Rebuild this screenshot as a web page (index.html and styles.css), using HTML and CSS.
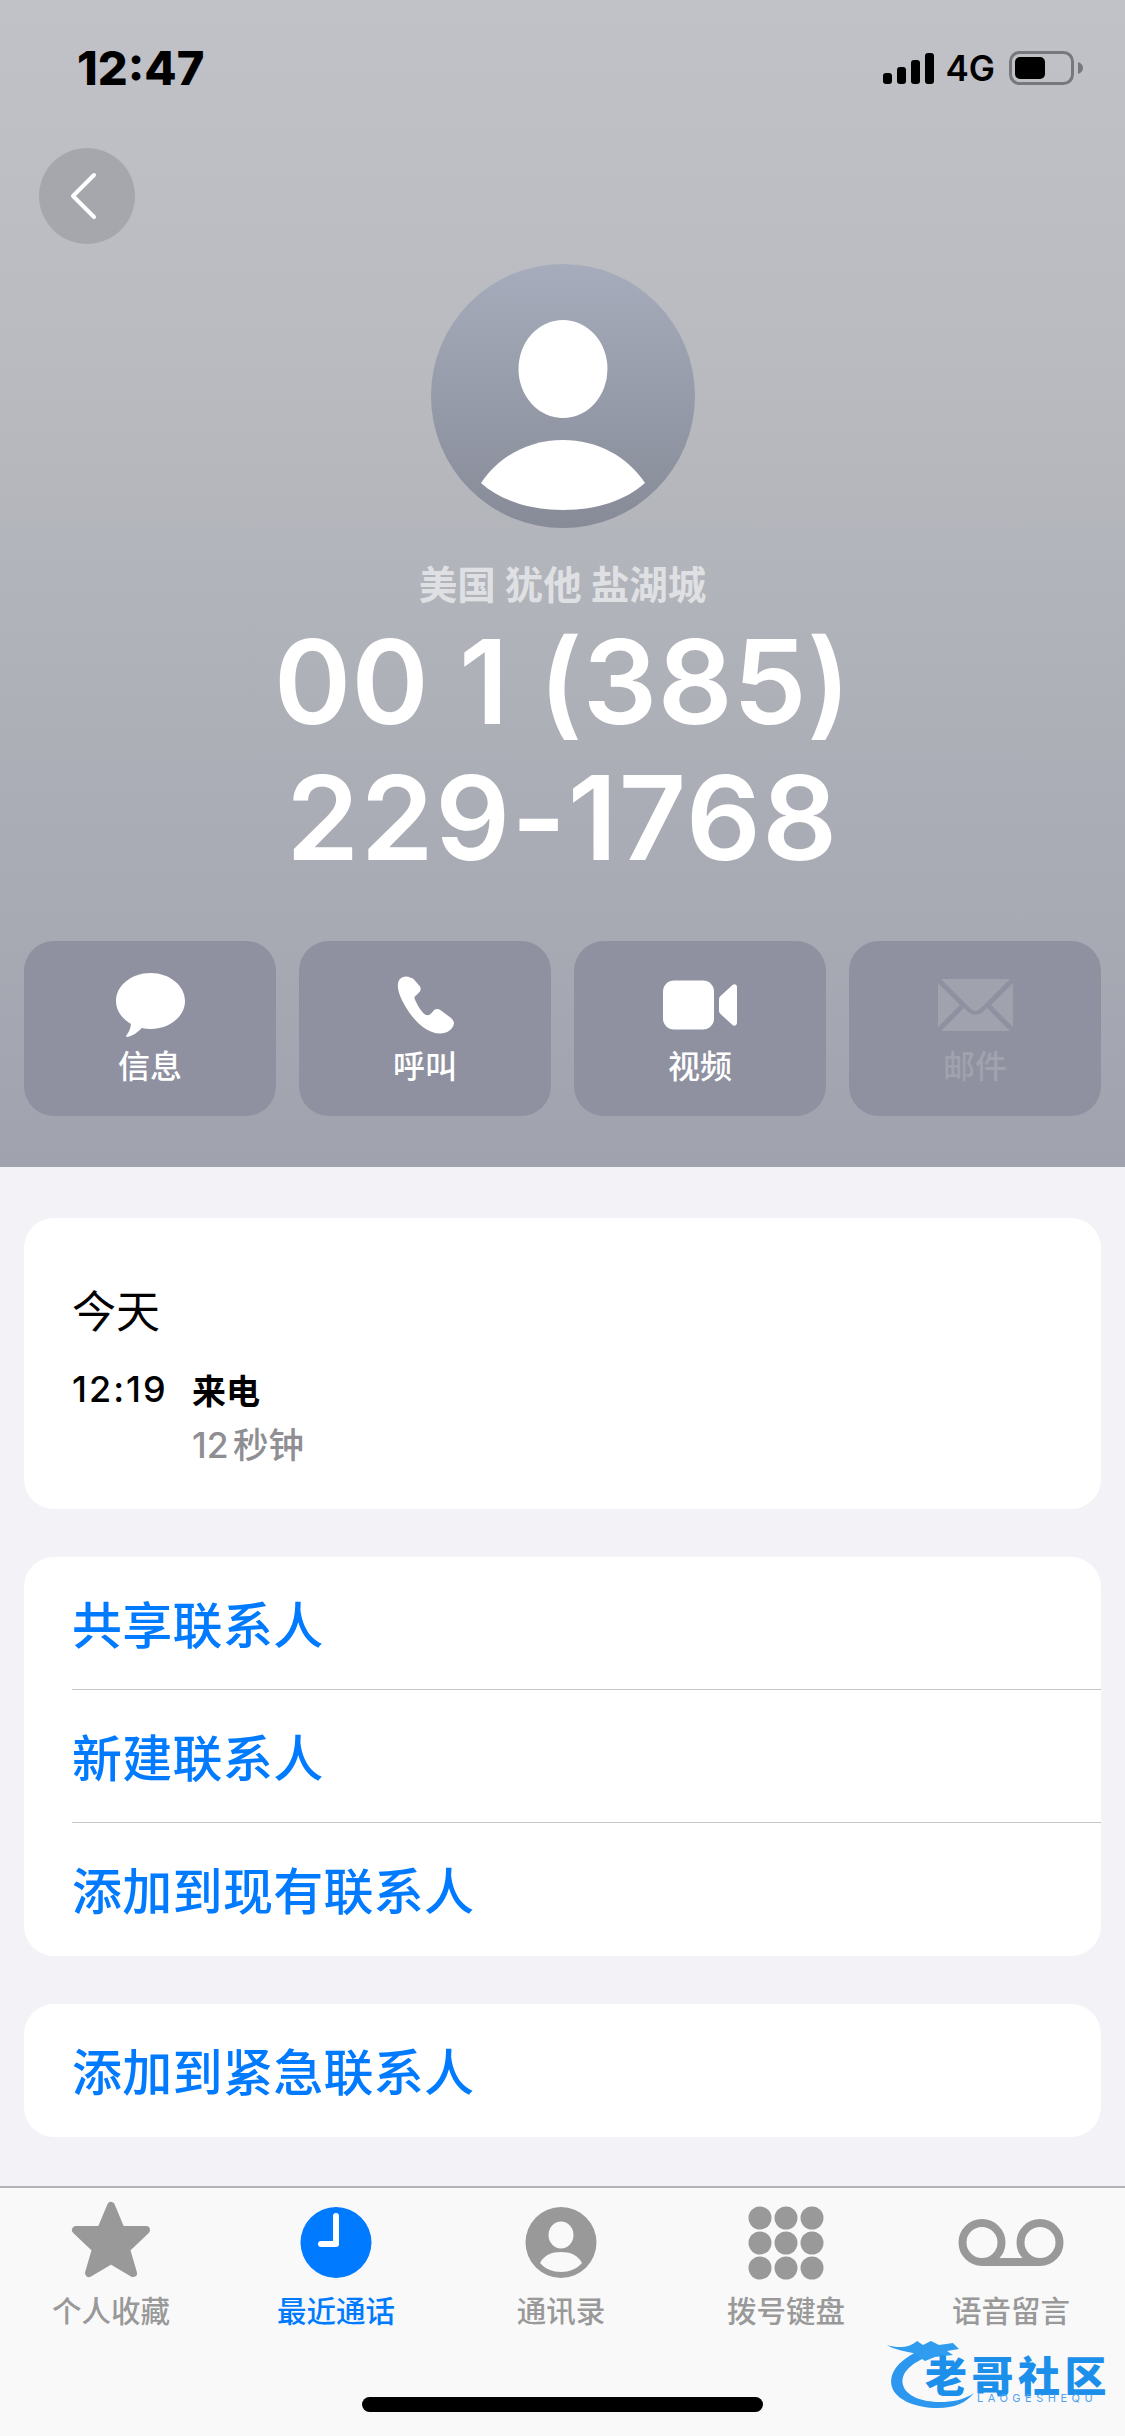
FILE: index.html
```html
<!DOCTYPE html>
<html lang="zh-CN">
<head>
  <meta charset="UTF-8" />
  <title>最近通话</title>
  <link rel="stylesheet" href="styles.css">
</head>
<body>
<div class="phone">
  <header class="hero">
    <div class="status">
      <span class="time">12:47</span>
      <div class="status-right">
        <svg class="signal" width="51" height="31" viewBox="0 0 51 31">
          <rect x="0" y="20" width="9" height="11" rx="3"/>
          <rect x="14" y="14" width="9" height="17" rx="3"/>
          <rect x="28" y="7" width="9" height="24" rx="3"/>
          <rect x="42" y="0" width="9" height="31" rx="3"/>
        </svg>
        <span class="net">4G</span>
        <svg class="battery" width="74" height="34" viewBox="0 0 74 34">
          <rect x="1.5" y="1.5" width="62" height="31" rx="9" fill="none" stroke="#77787b" stroke-width="3"/>
          <rect x="6" y="6" width="30" height="22" rx="5" fill="#000"/>
          <path d="M69 11c3 1 5 3 5 6s-2 5-5 6z" fill="#77787b"/>
        </svg>
      </div>
    </div>

    <div class="back">
      <svg width="30" height="48" viewBox="0 0 30 48"><path d="M25 3 4 24l21 21" fill="none" stroke="#fff" stroke-width="4" stroke-linecap="round" stroke-linejoin="round"/></svg>
    </div>

    <div class="avatar">
      <svg width="264" height="264" viewBox="0 0 264 264">
        <ellipse cx="132" cy="105" rx="44.5" ry="49" fill="#fff"/>
        <path d="M50 219C68 192 98 176 132 176s64 16 82 43c-19 17-48 27-82 27s-63-10-82-27z" fill="#fff"/>
      </svg>
    </div>

    <div class="place">美国 犹他 盐湖城</div>
    <h1 class="number">00 1 (385)<br><span class="number-end">229-1768</span></h1>

    <div class="actions">
      <div class="action">
        <svg width="69" height="64" viewBox="0 0 69 64"><path d="M34.500 0C53.500 0 69 12.500 69 28S53.500 56 34.500 56c-3 0-6-.3-8.800-1-3.500 4-9 8-14.700 9-1 0-1.300-.8-.7-1.500 2-2.500 4.300-6.500 4.700-11.500C5.800 45.500 0 37.300 0 28 0 12.500 15.500 0 34.500 0z" fill="#fff"/></svg>
        <span>信息</span>
      </div>
      <div class="action">
        <svg width="57" height="57" viewBox="0 0 57 57"><path d="M13 1C10-1 5 0 2.500 3-1 8 1 18 9 31c9 15 22 26 34 26 7 0 13-4 14-10 0-3-2-5-5-7l-8-6c-3-2-6-2-8 1l-3 3c-2 1-3 1-5 0-4-3-8-10-10-15-1-2-.5-3 1-4l3-3c2-2 2-4 1-6l-6-7c-1-1-2-1.500-4-2z" fill="#fff"/></svg>
        <span>呼叫</span>
      </div>
      <div class="action">
        <svg width="74" height="49" viewBox="0 0 74 49"><rect x="0" y="0" width="51" height="49" rx="11" fill="#fff"/><path d="M56 19c0-1.500.5-2.500 1.500-3.500l12-11C71.500 3 74 4 74 7v35c0 3-2.500 4-4.500 2.500l-12-11C56.500 32.500 56 31.500 56 30z" fill="#fff"/></svg>
        <span>视频</span>
      </div>
      <div class="action off">
        <svg width="75" height="52" viewBox="0 0 75 52" fill="#a0a2ad"><path d="M3 0h69L42 30q-4.500 4-9 0z"/><path d="M0 4l22 22L0 48z"/><path d="M75 4 53 26l22 22z"/><path d="M3 52l23-23 5 4.500q6.500 4.500 13 0l5-4.500 23 23z"/></svg>
        <span>邮件</span>
      </div>
    </div>
  </header>

  <main class="list">
    <section class="card recent">
      <div class="day">今天</div>
      <div class="call">
        <span class="call-time">12:19</span>
        <div>
          <div class="call-type">来电</div>
          <div class="call-len">12 秒钟</div>
        </div>
      </div>
    </section>

    <section class="card">
      <div class="row">共享联系人</div>
      <div class="row">新建联系人</div>
      <div class="row">添加到现有联系人</div>
    </section>

    <section class="card">
      <div class="row">添加到紧急联系人</div>
    </section>
  </main>

  <nav class="tabs">
    <div class="tab">
      <svg width="110" height="82" viewBox="0 0 110 82"><path d="M55 7 65 31H90L70 50 77 74 55 61 33 74 40 50 20 31H45z" fill="#999" stroke="#999" stroke-width="8" stroke-linejoin="round"/></svg>
      <span>个人收藏</span>
    </div>
    <div class="tab on">
      <svg width="110" height="82" viewBox="0 0 110 82"><circle cx="55" cy="43.500" r="35.500" fill="#007aff"/><path d="M55 17V45H40" fill="none" stroke="#fff" stroke-width="6" stroke-linecap="round" stroke-linejoin="round"/></svg>
      <span>最近通话</span>
    </div>
    <div class="tab">
      <svg width="110" height="82" viewBox="0 0 110 82"><circle cx="55" cy="43.500" r="35.500" fill="#999"/><ellipse cx="55" cy="36" rx="12.500" ry="13.500" fill="#f9f9fa"/><path d="M34 64c4-8 12-11 21-11s17 3 21 11c-5 6-13 9-21 9s-16-3-21-9z" fill="#f9f9fa"/></svg>
      <span>通讯录</span>
    </div>
    <div class="tab">
      <svg width="110" height="82" viewBox="0 0 110 82" fill="#999">
        <circle cx="29" cy="19" r="11.500"/><circle cx="55" cy="19" r="11.500"/><circle cx="81" cy="19" r="11.500"/>
        <circle cx="29" cy="44" r="11.500"/><circle cx="55" cy="44" r="11.500"/><circle cx="81" cy="44" r="11.500"/>
        <circle cx="29" cy="69" r="11.500"/><circle cx="55" cy="69" r="11.500"/><circle cx="81" cy="69" r="11.500"/>
      </svg>
      <span>拨号键盘</span>
    </div>
    <div class="tab">
      <svg width="110" height="82" viewBox="0 0 110 82" fill="none" stroke="#999" stroke-width="8"><circle cx="26" cy="43.500" r="19.500"/><circle cx="84" cy="43.500" r="19.500"/><path d="M26 63H84"/></svg>
      <span>语音留言</span>
    </div>
  </nav>

  <div class="home-bar"></div>

  <div class="mark">
    <svg class="mark-dragon" width="110" height="80" viewBox="0 0 110 80">
      <path d="M36 14C12 24 1 38 5 52c4 13 24 21 46 21 16 0 28-5 36-15-10 7-22 9-34 9-18 0-34-6-37-17C13 38 24 28 44 20z" fill="#2b97ee"/>
      <path d="M0 10c12 4 24 2 30-4l6 4 8-4 8 4 14-2 6 6-12 2 6 4-18 2-10 4-12-8C16 16 6 14 0 10z" fill="#2f9cf0"/>
    </svg>
    <div class="mark-name">老哥社区</div>
    <div class="mark-en">LAOGESHEQU</div>
  </div>
</div>
</body>
</html>
```

FILE: styles.css
```css
* { box-sizing: border-box; }
html, body { margin: 0; padding: 0; width: 1125px; height: 2436px; overflow: hidden; }
body { font-family: "Inter", "Noto Sans CJK SC", sans-serif; background: #f2f2f7; color: #000; }
.phone { position: relative; display: flex; flex-direction: column; width: 1125px; height: 2436px; }

/* top part */
.hero { display: flex; flex-direction: column; height: 1167px; padding: 0 24px; background: linear-gradient(180deg, #c1c2c7 0%, #b9bbc0 30%, #a0a2ae 100%); }
.status { display: flex; justify-content: space-between; align-items: center; height: 68px; margin-top: 34px; padding: 0 18px 0 53px; }
.time { font-size: 47px; font-weight: 800; line-height: 68px; }
.status-right { display: flex; align-items: center; }
.net { margin: 0 14px 0 11px; font-size: 35px; font-weight: 600; line-height: 40px; }
.back { display: flex; justify-content: center; align-items: center; width: 96px; height: 96px; margin: 46px 0 0 15px; padding-right: 6px; border-radius: 50%; background: #a6a7ac; }
.avatar { width: 264px; height: 264px; margin: 20px auto 0; border-radius: 50%; background: linear-gradient(180deg, #a6acbb 0%, #878b98 100%); }
.place { margin-top: 32px; text-align: center; font-size: 38.5px; font-weight: 700; line-height: 50px; color: rgba(255,255,255,0.6); }
.number { margin: 4px 0 0; text-align: center; font-size: 117px; font-weight: 600; letter-spacing: 0.4px; line-height: 136px; color: #fff; }
.number-end { letter-spacing: 1.6px; }
.actions { display: flex; gap: 23px; margin-top: 55px; }
.action { display: flex; flex-direction: column; align-items: center; width: 252px; height: 175px; border-radius: 30px; background: #8f91a0; color: #fff; font-size: 32px; font-weight: 500; }
.action svg { margin-top: 32px; height: 64px; }
.action span { margin-top: 7px; line-height: 46px; }
.action.off span { color: #a0a2ae; }

/* list */
.list { flex: 1; display: flex; flex-direction: column; gap: 48px; padding: 51px 24px 0; }
.card { border-radius: 30px; background: #fff; padding-left: 48px; }
.recent { height: 291px; padding-top: 64px; }
.day { font-size: 44px; line-height: 60px; }
.call { display: flex; margin-top: 21px; }
.call-time { width: 120px; font-size: 36px; letter-spacing: 2px; font-weight: 500; line-height: 52px; }
.call-type { padding-top: 3px; font-size: 34px; font-weight: 700; line-height: 52px; }
.call-len { margin-top: 2px; font-size: 35.5px; word-spacing: -5px; font-weight: 500; line-height: 52px; color: #8e8e93; }
.row { height: 133px; padding-top: 6px; font-size: 50px; letter-spacing: 0.3px; font-weight: 500; line-height: 127px; color: #007aff; border-bottom: 1px solid #c6c6c8; }
.row:last-child { border-bottom: 0; }

/* bottom bar */
.tabs { display: flex; height: 250px; padding-top: 11px; background: #f9f9fa; border-top: 2px solid #b3b3b6; }
.tab { display: flex; flex-direction: column; align-items: center; width: 225px; color: #999; font-size: 29.5px; font-weight: 500; }
.tab:first-child { margin-left: -1.5px; }
.tab span { margin-top: 9px; line-height: 42px; }
.tab.on { color: #007aff; }
.home-bar { position: absolute; left: 362px; top: 2397px; width: 401px; height: 15px; border-radius: 8px; background: #000; }

/* watermark over the bar */
.mark { position: absolute; left: 887px; top: 2335px; width: 225px; height: 76px; padding: 26px 0 0 38px; }
.mark-dragon { position: absolute; left: 0; top: 0; }
.mark-name { position: relative; font-size: 42px; font-weight: 900; line-height: 32px; letter-spacing: 4.5px; white-space: nowrap; color: #1c8fea; }
.mark-en { position: relative; margin-left: 52px; font-size: 11px; line-height: 11px; letter-spacing: 4.5px; white-space: nowrap; color: #4ea3ea; }
```
